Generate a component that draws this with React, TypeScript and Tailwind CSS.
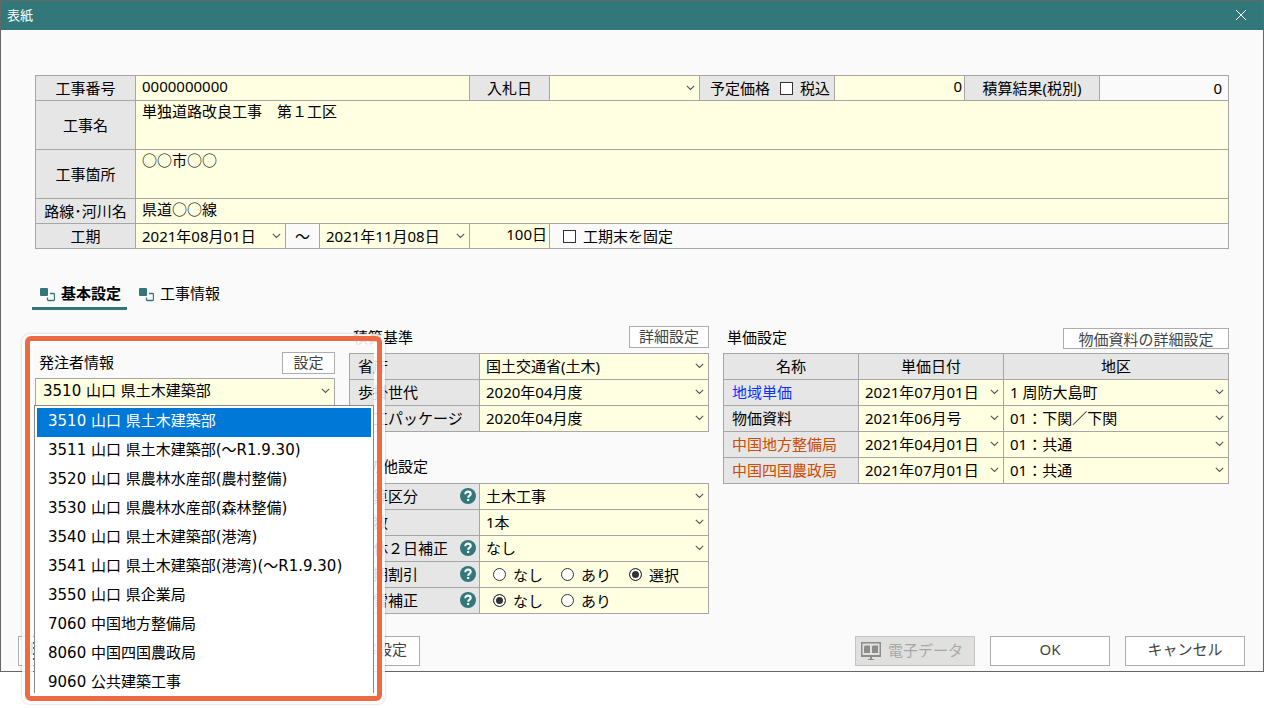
import React from "react";
import clsx from "clsx";

interface SelectBoxProps {
  id?: string;
  label?: string;
  value: string;
  className?: string;
}

interface PriceRow {
  name: string;
  color: string;
  date: string;
  area: string;
}

const issuers = [
  "3510 山口 県土木建築部",
  "3511 山口 県土木建築部(～R1.9.30)",
  "3520 山口 県農林水産部(農村整備)",
  "3530 山口 県農林水産部(森林整備)",
  "3540 山口 県土木建築部(港湾)",
  "3541 山口 県土木建築部(港湾)(～R1.9.30)",
  "3550 山口 県企業局",
  "7060 中国地方整備局",
  "8060 中国四国農政局",
  "9060 公共建築工事",
];

const standards = [
  { id: "ministry", name: "省庁", value: "国土交通省(土木)" },
  { id: "generation", name: "歩掛世代", value: "2020年04月度" },
  { id: "package", name: "施工パッケージ", value: "2020年04月度" },
];

const others = [
  { id: "category", name: "積算区分", help: true, value: "土木工事" },
  { id: "count", name: "本数", help: false, value: "1本" },
  { id: "holiday", name: "週休２日補正", help: true, value: "なし" },
  { id: "discount", name: "短期割引", help: true, options: ["なし", "あり", "選択"], checked: "選択" },
  { id: "snow", name: "豪雪補正", help: true, options: ["なし", "あり"], checked: "なし" },
];

const prices: PriceRow[] = [
  { name: "地域単価", color: "text-[#0a32ff]", date: "2021年07月01日", area: "1 周防大島町" },
  { name: "物価資料", color: "text-black", date: "2021年06月号", area: "01：下関／下関" },
  { name: "中国地方整備局", color: "text-[#cc4c00]", date: "2021年04月01日", area: "01：共通" },
  { name: "中国四国農政局", color: "text-[#cc4c00]", date: "2021年07月01日", area: "01：共通" },
];

const cell = "border-r border-b border-[#a6a6a6]";
const head = "flex shrink-0 items-center justify-center bg-[#e6e6e6]";
const button = "border border-[#adadad] bg-white text-[#444]";
const checkbox = "size-[13px] shrink-0 appearance-none border border-[#333] bg-white checked:bg-[#333]";

function SelectBox({ id, label, value, className }: SelectBoxProps) {
  return (
    <div className={clsx("relative flex h-full w-full items-center bg-[#ffffe1]", className)}>
      <select
        id={id}
        aria-label={label}
        defaultValue={value}
        className="h-full w-full appearance-none bg-transparent pl-1.5 leading-5 outline-none"
      >
        <option>{value}</option>
      </select>
      <svg
        width="9"
        height="6"
        viewBox="0 0 9 6"
        fill="none"
        stroke="#555"
        strokeWidth="1.1"
        className="pointer-events-none absolute right-1"
      >
        <path d="M.8.8 4.5 4.5 8.2.8" />
      </svg>
    </div>
  );
}

function TabIcon() {
  return (
    <svg width="15" height="18" viewBox="0 0 15 18" fill="none">
      <rect y="4" width="8" height="8" rx="1" fill="#32787a" />
      <path
        d="M10 9.500h3.500a1 1 0 0 1 1 1v5a1 1 0 0 1-1 1H8.500a1 1 0 0 1-1-1V13.500"
        stroke="#32787a"
        strokeWidth="1.3"
      />
    </svg>
  );
}

function HelpButton({ name }: { name: string }) {
  return (
    <button
      type="button"
      aria-label={`${name}のヘルプ`}
      className="flex size-4 items-center justify-center rounded-full bg-[#32787a]"
    >
      <svg width="16" height="16" viewBox="0 0 16 16" fill="none" stroke="#fff" strokeWidth="2.1">
        <path d="M5.3 6.3c0-1.7 1.1-2.7 2.7-2.7s2.7.9 2.7 2.3c0 1.8-2.5 1.7-2.5 3.8" />
        <path d="M7.1 12h2.1" />
      </svg>
    </button>
  );
}

function CoverForm() {
  return (
    <div className="mx-[34px] border-t border-l border-[#a6a6a6]">
      <div className="flex h-[25px]">
        <label htmlFor="number" className={clsx(cell, head, "w-[100px]")}>工事番号</label>
        <input
          id="number"
          defaultValue="0000000000"
          className={clsx(cell, "min-w-0 flex-1 bg-[#ffffe1] px-1.5 pb-1 outline-none")}
        />
        <label htmlFor="bid" className={clsx(cell, head, "w-20")}>入札日</label>
        <div className={clsx(cell, "w-[150px]")}>
          <SelectBox id="bid" value="" />
        </div>
        <div className={clsx(cell, "flex w-[135px] items-center justify-end gap-2.5 bg-[#e6e6e6] pr-1")}>
          <label htmlFor="planned">予定価格</label>
          <label className="flex items-center gap-[7px]">
            <input type="checkbox" className={checkbox} />
            税込
          </label>
        </div>
        <input
          id="planned"
          defaultValue="0"
          className={clsx(cell, "w-[130px] bg-[#ffffe1] px-0.5 pb-1 text-right outline-none")}
        />
        <div className={clsx(cell, head, "w-[135px]")}>積算結果(税別)</div>
        <output className={clsx(cell, "flex w-[129px] items-center justify-end pr-1.5")}>0</output>
      </div>
      <div className="flex h-[49px]">
        <label htmlFor="title" className={clsx(cell, head, "w-[100px]")}>工事名</label>
        <textarea
          id="title"
          defaultValue="単独道路改良工事　第１工区"
          className={clsx(cell, "flex-1 resize-none bg-[#ffffe1] px-1.5 leading-5 outline-none")}
        />
      </div>
      <div className="flex h-[49px]">
        <label htmlFor="place" className={clsx(cell, head, "w-[100px]")}>工事箇所</label>
        <textarea
          id="place"
          defaultValue="○○市○○"
          className={clsx(cell, "flex-1 resize-none bg-[#ffffe1] px-1.5 leading-5 outline-none")}
        />
      </div>
      <div className="flex h-[25px]">
        <label htmlFor="route" className={clsx(cell, head, "w-[100px]")}>路線･河川名</label>
        <input
          id="route"
          defaultValue="県道○○線"
          className={clsx(cell, "min-w-0 flex-1 bg-[#ffffe1] px-1.5 pb-1 outline-none")}
        />
      </div>
      <div className="flex h-[25px]">
        <label htmlFor="from" className={clsx(cell, head, "w-[100px]")}>工期</label>
        <div className={clsx(cell, "w-[150px]")}>
          <SelectBox id="from" value="2021年08月01日" />
        </div>
        <div className={clsx(cell, "flex w-[34px] items-center justify-center")}>～</div>
        <div className={clsx(cell, "w-[150px]")}>
          <SelectBox label="工期末" value="2021年11月08日" />
        </div>
        <input
          aria-label="日数"
          defaultValue="100日"
          className={clsx(cell, "w-20 bg-[#ffffe1] px-0.5 pb-1 text-right outline-none")}
        />
        <label className={clsx(cell, "flex flex-1 items-center gap-[7px] pl-[13px]")}>
          <input type="checkbox" className={checkbox} />
          工期末を固定
        </label>
      </div>
    </div>
  );
}

function IssuerPanel() {
  return (
    <section className="relative z-10 w-[300px] shrink-0 pt-[26px] font-['DejaVu_Sans','Noto_Sans_CJK_JP',sans-serif]">
      <div className="flex h-[22px] items-center justify-between pl-1">
        <label htmlFor="issuer">発注者情報</label>
        <button type="button" className={clsx(button, "h-[22px] w-[53px] leading-5")}>設定</button>
      </div>
      <div className="mt-1 h-7 border border-[#a6a6a6]">
        <SelectBox id="issuer" value={issuers[0]} className="pb-0.5 pl-px" />
      </div>
      {/* Open list */}
      <ul
        role="listbox"
        aria-label="発注者情報"
        className="absolute top-[79px] -left-px h-72 w-[340px] overflow-hidden border-x border-t border-[#888] bg-white p-0.5"
      >
        {issuers.map((issuer, i) => (
          <li
            key={issuer}
            role="option"
            aria-selected={i === 0}
            className={clsx("h-[29px] px-[11px] leading-[26px]", i === 0 && "bg-[#0078d7] text-white")}
          >
            {issuer}
          </li>
        ))}
      </ul>
      {/* Highlight frame */}
      <div className="pointer-events-none absolute top-2 -left-[13px] h-[370px] w-[363px] rounded-lg border-[11px] border-white/85 shadow-[0_0_2px_rgba(0,0,0,0.3)]" />
      <div className="pointer-events-none absolute top-2.5 -left-2.5 h-[365px] w-[357px] rounded-md border-[5px] border-[#ee6a42]" />
    </section>
  );
}

function StandardPanel() {
  return (
    <section className="w-[360px] shrink-0">
      <div className="flex h-[27px] items-start justify-between pl-1">
        <h2 className="leading-[22px]">積算基準</h2>
        <button type="button" className={clsx(button, "h-[22px] w-20 pb-0.5 leading-[18px]")}>詳細設定</button>
      </div>
      <table className="w-full table-fixed border-collapse leading-5">
        <tbody>
          {standards.map((row) => (
            <tr key={row.id} className="h-[26px]">
              <th className="w-[130px] border border-[#a6a6a6] bg-[#e6e6e6] p-0 pb-0.5 pl-2 text-left font-normal">
                <label htmlFor={row.id}>{row.name}</label>
              </th>
              <td className="h-[26px] border border-[#a6a6a6] bg-[#ffffe1] p-0">
                <SelectBox id={row.id} value={row.value} className="pb-0.5" />
              </td>
            </tr>
          ))}
        </tbody>
      </table>

      <h2 className="pt-[23px] pb-1.5 pl-1 leading-[22px]">その他設定</h2>
      <table className="w-full table-fixed border-collapse leading-5">
        <tbody>
          {others.map((row) => (
            <tr key={row.id} className="h-[26px]">
              <th className="w-[130px] border border-[#a6a6a6] bg-[#e6e6e6] p-0 pb-0.5 font-normal">
                <div className="flex items-center justify-between pr-[3px] pl-2">
                  <label htmlFor={row.id}>{row.name}</label>
                  {row.help && <HelpButton name={row.name} />}
                </div>
              </th>
              <td className="h-[26px] border border-[#a6a6a6] bg-[#ffffe1] p-0">
                {row.options ? (
                  <div role="radiogroup" aria-label={row.name} className="flex items-center gap-[18px] pl-[13px]">
                    {row.options.map((option, i) => (
                      <label key={option} className="flex items-center gap-[7px]">
                        <input
                          type="radio"
                          id={i === 0 ? row.id : undefined}
                          name={row.id}
                          defaultChecked={option === row.checked}
                          className="size-[13px] appearance-none rounded-full border border-[#333] bg-white checked:bg-[#333] checked:shadow-[inset_0_0_0_2px_#fff]"
                        />
                        {option}
                      </label>
                    ))}
                  </div>
                ) : (
                  <SelectBox id={row.id} value={row.value ?? ""} className="pb-0.5" />
                )}
              </td>
            </tr>
          ))}
        </tbody>
      </table>
    </section>
  );
}

function PricePanel() {
  return (
    <section className="min-w-0 flex-1">
      <div className="flex h-[27px] items-start justify-between pl-1">
        <h2 className="leading-[22px]">単価設定</h2>
        <button type="button" className={clsx(button, "mt-0.5 h-[21px] w-[166px] leading-[18px]")}>
          物価資料の詳細設定
        </button>
      </div>
      <table className="w-full table-fixed border-collapse leading-5">
        <thead>
          <tr className="h-[26px] bg-[#e6e6e6]">
            <th className="w-[135px] border border-[#a6a6a6] p-0 pb-0.5 font-normal">名称</th>
            <th className="w-[145px] border border-[#a6a6a6] p-0 pb-0.5 font-normal">単価日付</th>
            <th className="border border-[#a6a6a6] p-0 pb-0.5 font-normal">地区</th>
          </tr>
        </thead>
        <tbody>
          {prices.map((row) => (
            <tr key={row.name} className="h-[26px]">
              <th className={clsx("border border-[#a6a6a6] bg-[#e6e6e6] p-0 pb-0.5 pl-2 text-left font-normal", row.color)}>
                {row.name}
              </th>
              <td className="h-[26px] border border-[#a6a6a6] bg-[#ffffe1] p-0">
                <SelectBox label={`${row.name} 単価日付`} value={row.date} className="pb-0.5" />
              </td>
              <td className="h-[26px] border border-[#a6a6a6] bg-[#ffffe1] p-0">
                <SelectBox label={`${row.name} 地区`} value={row.area} className="pb-0.5" />
              </td>
            </tr>
          ))}
        </tbody>
      </table>
    </section>
  );
}

export default function App() {
  return (
    <div className="min-h-screen bg-white font-['Noto_Sans','Noto_Sans_CJK_JP',sans-serif] text-[15px] leading-6 text-black">
      <div role="dialog" aria-label="表紙" className="border border-[#666] bg-[#fafafa]">
        <header className="flex h-[29px] items-center justify-between bg-[#32787a] pr-4 pb-0.5 pl-1.5 text-white">
          <h1 className="text-[13px]">表紙</h1>
          <button type="button" aria-label="閉じる">
            <svg width="12" height="12" viewBox="0 0 12 12" stroke="#fff" strokeWidth="1">
              <path d="M1 1l10 10M11 1 1 11" />
            </svg>
          </button>
        </header>

        <div className="pt-[45px]">
          <CoverForm />
        </div>

        <div role="tablist" className="mt-[29px] flex gap-1 pl-[31px]">
          <button
            type="button"
            role="tab"
            aria-selected="true"
            className="flex h-8 items-center gap-1.5 border-b-[3px] border-[#32787a] pr-1.5 pl-2 font-bold"
          >
            <TabIcon />
            基本設定
          </button>
          <button
            type="button"
            role="tab"
            aria-selected="false"
            className="flex h-8 items-center gap-1.5 border-b-[3px] border-transparent pr-1.5 pl-2"
          >
            <TabIcon />
            工事情報
          </button>
        </div>

        <div className="mx-[34px] mt-4 flex gap-3.5">
          <IssuerPanel />
          <StandardPanel />
          <PricePanel />
        </div>

        <footer className="mt-[22px] flex justify-between pr-[18px] pb-[5px] pl-[17px]">
          <div className="flex gap-3.5">
            <button type="button" aria-label="印刷" className={clsx(button, "flex h-[30px] w-32 items-center pl-3")}>
              <svg width="18" height="18" viewBox="0 0 18 18" fill="none" stroke="#32787a" strokeWidth="2">
                <path d="M1 1h16v11H1zM1 6h16M1 17h16" />
              </svg>
            </button>
            <button type="button" className={clsx(button, "h-[30px] w-[260px] pr-3 pb-1 text-right")}>
              経費率設定
            </button>
          </div>
          <div className="flex gap-[15px]">
            <button
              type="button"
              disabled
              className="flex h-[30px] w-[120px] items-center gap-[7px] border border-[#c3c3c3] bg-[#e0e0df] pb-0.5 pl-[5px] text-[#a8a8a8]"
            >
              <svg width="20" height="20" viewBox="0 0 20 20" fill="#8c8c8c">
                <path d="M0 2h20v15H0zM1.500 3.500v11.500h17V3.500z" fillRule="evenodd" />
                <path d="M3 13V7q0-1.500 1.500-1.500H9V13zM11 13V7q0-1.500 1.500-1.500H17V13z" />
                <path d="M9 17h2v2h2v1H7v-1h2z" />
              </svg>
              電子データ
            </button>
            <button type="button" className={clsx(button, "h-[30px] w-[120px] pb-1")}>OK</button>
            <button type="button" className={clsx(button, "h-[30px] w-[120px] pb-1")}>キャンセル</button>
          </div>
        </footer>
      </div>
    </div>
  );
}
